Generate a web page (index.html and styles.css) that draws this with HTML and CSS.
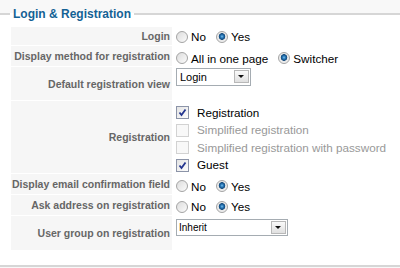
FILE: index.html
```html
<!DOCTYPE html>
<html lang="en">
<head>
  <meta charset="UTF-8">
  <title>Login &amp; Registration</title>
  <link rel="stylesheet" href="styles.css">
</head>
<body>
  <fieldset class="adminform">
    <legend>Login &amp; Registration</legend>

    <div class="param-row row-login">
      <div class="param-key">Login</div>
      <div class="param-value">
        <label class="radio"><input type="radio" name="login" value="0"> No</label>
        <label class="radio"><input type="radio" name="login" value="1" checked> Yes</label>
      </div>
    </div>

    <div class="param-row row-method">
      <div class="param-key">Display method for registration</div>
      <div class="param-value">
        <label class="radio"><input type="radio" name="method" value="0"> All in one page</label>
        <label class="radio"><input type="radio" name="method" value="1" checked> Switcher</label>
      </div>
    </div>

    <div class="param-row row-view">
      <div class="param-key">Default registration view</div>
      <div class="param-value top">
        <span class="select select-small">
          <select name="view">
            <option>Login</option>
            <option>Registration</option>
          </select>
          <span class="select-arrow"></span>
        </span>
      </div>
    </div>

    <div class="param-row row-reg">
      <div class="param-key">Registration</div>
      <div class="param-value top checks">
        <label class="check"><input type="checkbox" checked><span class="box"><svg viewBox="0 0 11 11"><path d="M2.5 5.5 L4.5 8 L8.5 2.5"/></svg></span>Registration</label>
        <label class="check disabled"><input type="checkbox" disabled><span class="box"><svg viewBox="0 0 11 11"><path d="M2.5 5.5 L4.5 8 L8.5 2.5"/></svg></span>Simplified registration</label>
        <label class="check disabled"><input type="checkbox" disabled><span class="box"><svg viewBox="0 0 11 11"><path d="M2.5 5.5 L4.5 8 L8.5 2.5"/></svg></span>Simplified registration with password</label>
        <label class="check"><input type="checkbox" checked><span class="box"><svg viewBox="0 0 11 11"><path d="M2.5 5.5 L4.5 8 L8.5 2.5"/></svg></span>Guest</label>
      </div>
    </div>

    <div class="param-row row-email">
      <div class="param-key">Display email confirmation field</div>
      <div class="param-value">
        <label class="radio"><input type="radio" name="email" value="0"> No</label>
        <label class="radio"><input type="radio" name="email" value="1" checked> Yes</label>
      </div>
    </div>

    <div class="param-row row-address">
      <div class="param-key">Ask address on registration</div>
      <div class="param-value">
        <label class="radio"><input type="radio" name="address" value="0"> No</label>
        <label class="radio"><input type="radio" name="address" value="1" checked> Yes</label>
      </div>
    </div>

    <div class="param-row row-group">
      <div class="param-key">User group on registration</div>
      <div class="param-value top">
        <span class="select select-wide">
          <select name="group">
            <option>Inherit</option>
            <option>Registered</option>
          </select>
          <span class="select-arrow"></span>
        </span>
      </div>
    </div>
  </fieldset>
</body>
</html>
```

FILE: styles.css
```css
body {
  font-family: "Liberation Sans", Arial, sans-serif;
  background-color: #f8f8f8;
  margin: 0;
  padding: 7px 0 0 0;
  color: #000;
}
fieldset.adminform {
  margin: 0;
  padding: 6px 0 0 10px;
  border: none;
  border-top: 2px solid #d6d6d6;
  border-bottom: 2px solid #d6d6d6;
  background-color: #fff;
  min-width: 0;
}
fieldset.adminform legend {
  color: #146295;
  font-size: 12px;
  font-weight: bold;
  line-height: 14px;
  padding: 0 3px;
  margin-left: 0;
}
.param-row {
  display: flex;
  margin-left: 1px;
}
.param-key {
  flex: none;
  width: 161px;
  box-sizing: border-box;
  background-color: #f6f6f6;
  border-bottom: 1px solid #fff;
  color: #666;
  font-size: 10.5px;
  font-weight: bold;
  white-space: nowrap;
  text-align: right;
  padding-right: 2px;
  display: flex;
  align-items: center;
  justify-content: flex-end;
}
.param-value {
  flex: 1;
  display: flex;
  align-items: center;
  padding-left: 4px;
  font-size: 11.7px;
  white-space: nowrap;
}
.param-value.top {
  align-items: flex-start;
}

/* row heights */
.row-login .param-key { height: 19px; }
.row-method .param-key { height: 21px; }
.row-view .param-key { height: 34px; }
.row-reg .param-key { height: 73px; }
.row-email .param-key { height: 21px; }
.row-address .param-key { height: 21px; }
.row-group .param-key { height: 34px; border-bottom: none; }
.row-group { margin-bottom: 15px; }

.row-method .param-value { padding-top: 3px; }
.row-view .param-value { padding-top: 1px; }
.row-reg .param-value { padding-top: 3px; }
.row-email .param-value { padding-top: 3px; }
.row-address .param-value { padding-top: 2px; }
.row-group .param-value { padding-top: 3px; }

/* radios */
.radio {
  display: inline-flex;
  align-items: center;
  margin-right: 10px;
}
.radio input {
  appearance: none;
  -webkit-appearance: none;
  width: 12px;
  height: 12px;
  margin: 0 3px 0 0;
  border: 1px solid #a4a4a4;
  border-radius: 50%;
  background: linear-gradient(135deg, #dcdcdc, #fbfbfb);
  box-sizing: border-box;
}
.radio input:checked {
  background: radial-gradient(circle at 50% 45%, #7cc4ef 0, #2a78b8 1.5px, #11487a 3px, #e6e6e6 3.6px, #fafafa 100%);
}

/* checkboxes */
.checks {
  flex-direction: column;
}
.check {
  display: flex;
  align-items: center;
  height: 17.5px;
  line-height: 14px;
}
.check input {
  display: none;
}
.check .box {
  width: 13px;
  height: 13px;
  box-sizing: border-box;
  border: 1px solid #8c94a8;
  background: linear-gradient(135deg, #e4e4e4, #fcfcfc);
  margin-right: 8px;
  display: flex;
}
.check .box svg {
  width: 11px;
  height: 11px;
  display: none;
}
.check .box path {
  fill: none;
  stroke: #23358f;
  stroke-width: 1.8;
}
.check input:checked + .box svg {
  display: block;
}
.check.disabled {
  color: #999;
}
.check.disabled .box {
  border-color: #d2d2d2;
  background: #f8f8f8;
}

/* selects */
.select {
  position: relative;
  display: inline-block;
}
.select select {
  appearance: none;
  -webkit-appearance: none;
  box-sizing: border-box;
  height: 18px;
  border: 1px solid #a5acb2;
  border-radius: 0;
  background: #fff;
  font-family: "Liberation Sans", Arial, sans-serif;
  font-size: 11px;
  color: #000;
  padding: 0 0 0 3px;
  margin: 0;
  display: block;
}
.select-small select {
  width: 75px;
}
.select-wide select {
  width: 112px;
  height: 17px;
  font-size: 10px;
  padding-left: 2px;
}
.select-arrow {
  position: absolute;
  right: 2px;
  top: 2px;
  width: 15px;
  height: 13px;
  box-sizing: border-box;
  border: 1px solid #b8b8b8;
  background: linear-gradient(#fafafa, #e0e0e0);
  pointer-events: none;
}
.select-arrow::after {
  content: "";
  position: absolute;
  left: 3px;
  top: 4px;
  border-left: 3.5px solid transparent;
  border-right: 3.5px solid transparent;
  border-top: 3.5px solid #111;
}
```
